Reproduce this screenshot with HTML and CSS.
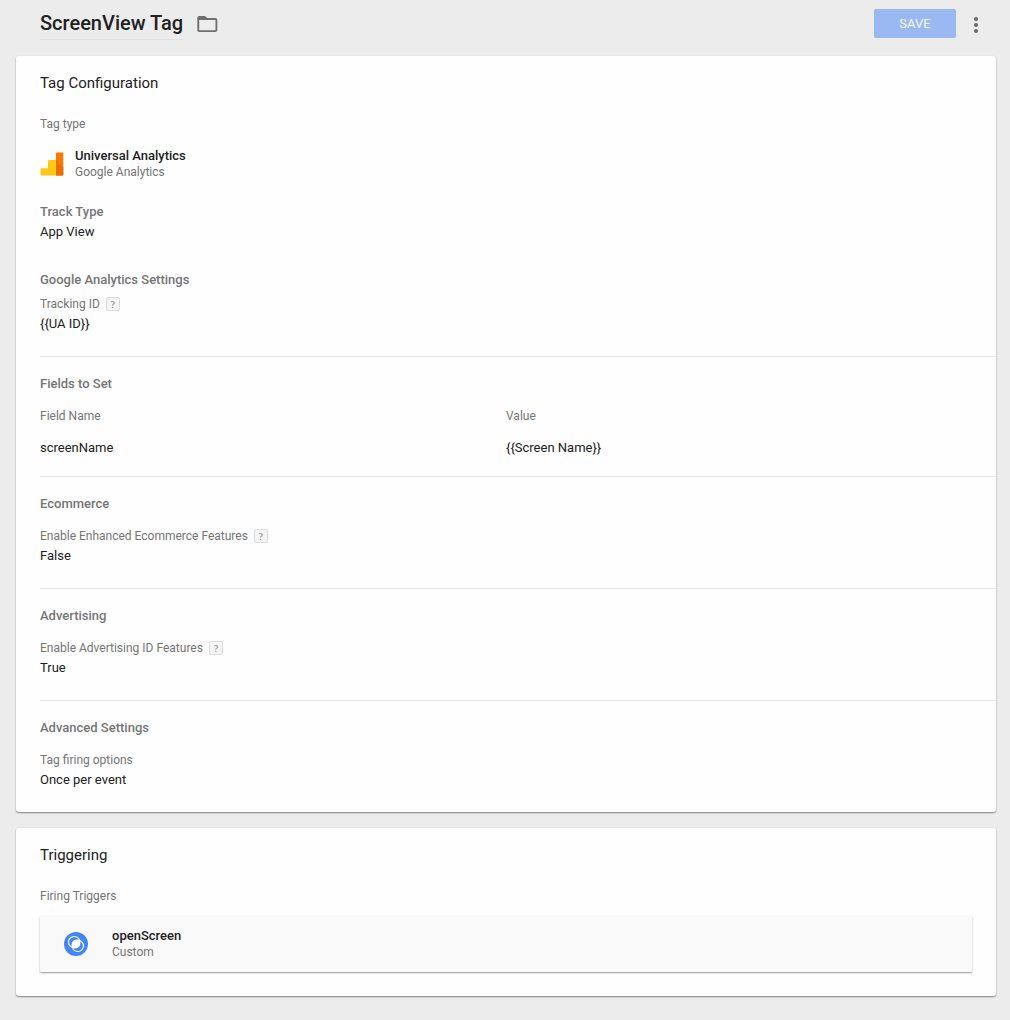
FILE: index.html
```html
<!DOCTYPE html>
<html lang="en">
<head>
<meta charset="utf-8">
<title>ScreenView Tag</title>
<link rel="stylesheet" href="styles.css">
</head>
<body>
<header class="header">
  <h1 class="header-title">ScreenView Tag</h1>
  <svg class="folder" viewBox="0 0 24 24" width="24" height="24"><path fill="#6e6e6e" fill-rule="evenodd" d="M4.300 4H10l2 2h8.300q2 0 2 2v10q0 2-2 2h-16q-2 0-2-2V6q0-2 2-2zM4.200 8v10.200h16.300V8z"/></svg>
  <button class="save">SAVE</button>
  <svg class="more" viewBox="0 0 24 24" width="24" height="24" fill="#6b6b6b"><circle cx="12" cy="6" r="2.1"/><circle cx="12" cy="12" r="2.1"/><circle cx="12" cy="18" r="2.1"/></svg>
</header>
<main class="content">
  <section class="card">
    <h2 class="card-title">Tag Configuration</h2>
    <div class="label">Tag type</div>
    <div class="tag-type">
      <svg class="analytics" viewBox="0 0 24 24" width="24" height="24">
        <path fill="#ffc517" d="M.5 17q0-.8.8-.8H8V9q0-1 1-1h7v15.500H1.500q-1 0-1-1z"/>
        <path fill="#f57c00" d="M16 1.300q0-.8.8-.8h5.700q.8 0 .8.8v21.400q0 .8-.8.8H16z"/>
        <path fill="#e86f00" d="M16 8l7.300 7.300v7.400q0 .8-.8.8H16z"/>
      </svg>
      <div>
        <div class="name">Universal Analytics</div>
        <div class="sub">Google Analytics</div>
      </div>
    </div>
    <div class="track">
      <h3 class="heading">Track Type</h3>
      <div class="value">App View</div>
    </div>
    <div class="settings">
      <h3 class="heading">Google Analytics Settings</h3>
      <div class="label label-tight">Tracking ID <span class="help">?</span></div>
      <div class="value">{{UA ID}}</div>
    </div>
    <div class="group">
      <h3 class="heading">Fields to Set</h3>
      <div class="fields">
        <div class="label">Field Name</div><div class="label">Value</div>
        <div class="value">screenName</div><div class="value">{{Screen Name}}</div>
      </div>
    </div>
    <div class="group">
      <h3 class="heading">Ecommerce</h3>
      <div class="label label-spaced">Enable Enhanced Ecommerce Features <span class="help">?</span></div>
      <div class="value">False</div>
    </div>
    <div class="group">
      <h3 class="heading">Advertising</h3>
      <div class="label label-spaced">Enable Advertising ID Features <span class="help">?</span></div>
      <div class="value">True</div>
    </div>
    <div class="group">
      <h3 class="heading">Advanced Settings</h3>
      <div class="label label-spaced">Tag firing options</div>
      <div class="value">Once per event</div>
    </div>
  </section>
  <section class="card card-triggering">
    <h2 class="card-title">Triggering</h2>
    <div class="label">Firing Triggers</div>
    <div class="trigger">
      <svg viewBox="0 0 24 24" width="24" height="24">
        <circle cx="12" cy="12" r="12" fill="#4285f4"/>
        <circle cx="12" cy="12" r="4.300" fill="#fff"/>
        <g fill="none" stroke="#fff" stroke-width="1.100"><circle cx="10.200" cy="10.200" r="5.700"/><circle cx="13.800" cy="13.800" r="5.700"/></g>
      </svg>
      <div>
        <div class="name">openScreen</div>
        <div class="sub">Custom</div>
      </div>
    </div>
  </section>
</main>
</body>
</html>
```
FILE: styles.css
```css
* { box-sizing: border-box; }
body { margin: 0; background: #ececec; font-family: Roboto, sans-serif; color: #212121; }
h1, h2, h3 { margin: 0; }
.header { display: flex; align-items: flex-start; height: 56px; padding: 0 22px 0 40px; }
.header-title { height: 40px; padding-top: 9px; border-bottom: 1px solid #e0e0e0; font-size: 20px; line-height: 28px; font-weight: 500; white-space: nowrap; }
.folder { margin: 12px 0 0 12px; }
.save { width: 82px; height: 29px; margin: 9px 8px 0 auto; padding: 0; border: 0; border-radius: 2px; background: #9ab8f2; color: #f8faff; font: 400 13px/29px Roboto, sans-serif; }
.more { margin-top: 13px; }
.content { display: flex; flex-direction: column; gap: 16px; padding: 0 14px 24px 16px; }
.card { height: 756px; padding: 15px 0 0 24px; background: #fefefe; border-radius: 3px; box-shadow: 0 1px 2px rgba(0,0,0,.34), 0 1px 1px rgba(0,0,0,.16); }
.card-triggering { height: 168px; padding-right: 24px; }
.card-title { margin-bottom: 19px; font-size: 15px; line-height: 24px; font-weight: 400; }
.label { display: flex; align-items: center; height: 20px; font-size: 12px; color: #757575; }
.label-tight { margin-top: 4px; }
.label-spaced { margin-top: 12px; }
.help { width: 14px; height: 14px; margin-left: 6px; border: 1px solid #dcdcdc; border-radius: 2px; background: #f5f5f5; font: 10px/13px "Liberation Serif", serif; text-align: center; }
.value { font-size: 13px; line-height: 20px; }
.heading { font-size: 13px; line-height: 20px; font-weight: 500; color: #757575; }
.tag-type { display: flex; align-items: center; gap: 11px; margin-top: 14px; }
.name { font-size: 13px; line-height: 16px; font-weight: 500; }
.sub { font-size: 12px; line-height: 16px; color: #757575; }
.track { margin-top: 22px; }
.settings { margin: 28px 0 22px; }
.group { height: 112px; padding-top: 17px; border-top: 1px solid #e8e8e8; }
.group:has(.fields) { height: 120px; }
.fields { display: grid; grid-template-columns: 466px 1fr; row-gap: 12px; margin-top: 12px; }
.trigger { display: flex; align-items: center; gap: 24px; height: 56px; margin-top: 10px; padding-left: 24px; background: #f9f9f9; border-radius: 1px; box-shadow: 0 1px 2px rgba(0,0,0,.32), 0 1px 1px rgba(0,0,0,.1); }
```
